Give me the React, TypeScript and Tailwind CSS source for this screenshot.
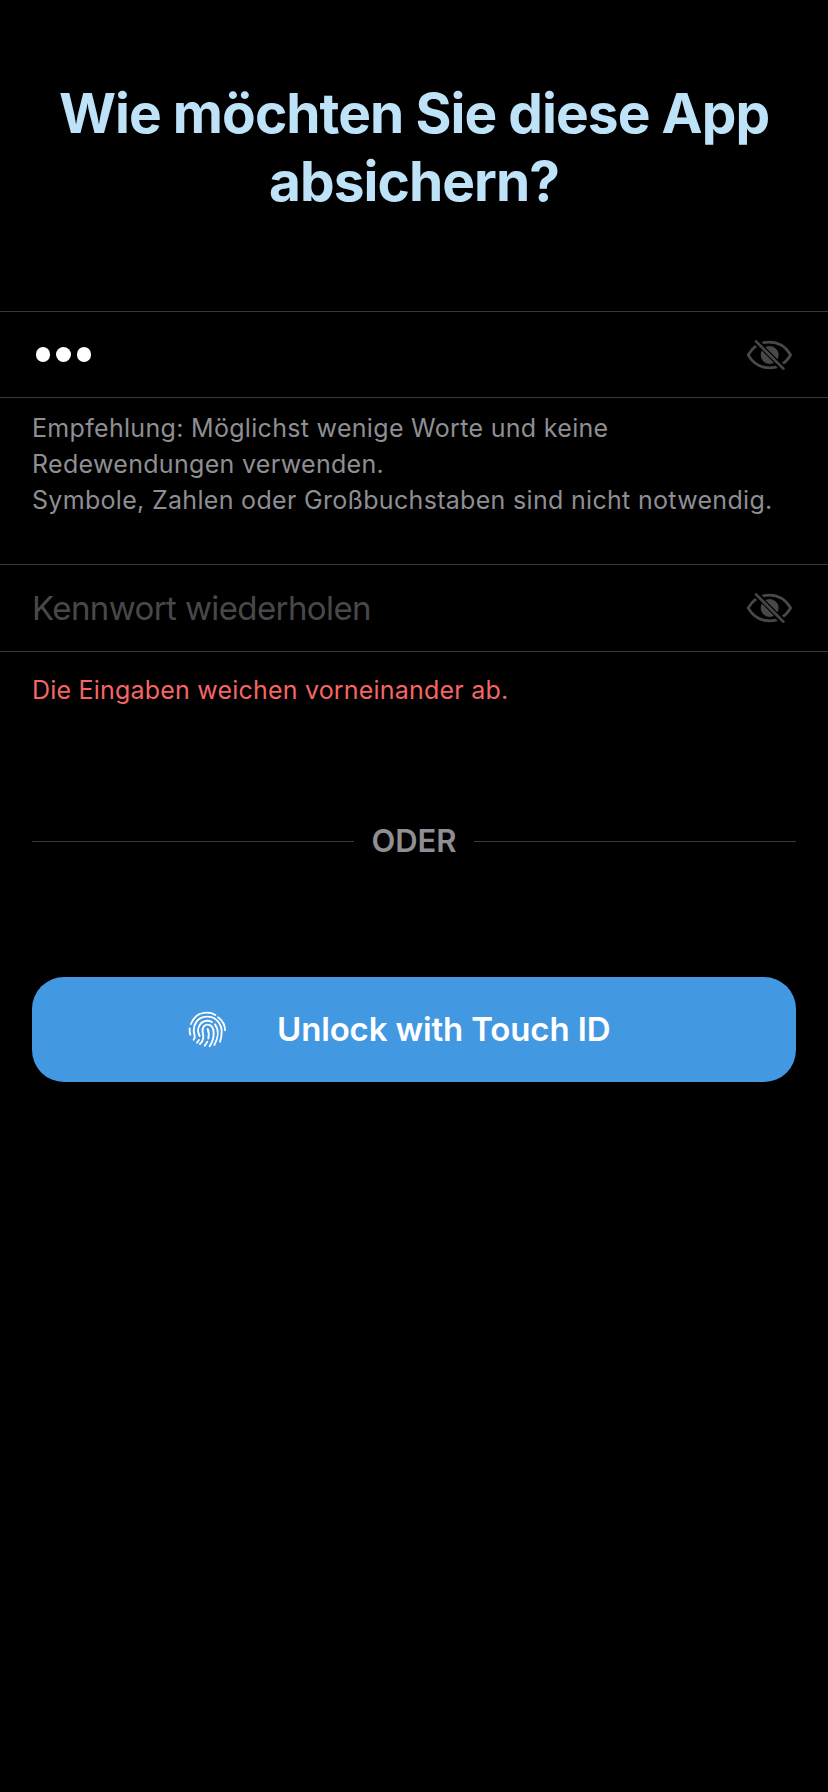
import React, { useId } from "react";

function EyeOff() {
  const id = useId();
  return (
    <svg viewBox="0 0 153 114" className="h-[38px] w-[51px] text-[#48484a]" fill="none" stroke="currentColor">
      <mask id={`${id}-lid`} maskUnits="userSpaceOnUse" x="0" y="0" width="153" height="114">
        <rect width="153" height="114" fill="white" stroke="none" />
        <path d="M24 4 L129 109" stroke="black" strokeWidth="20" />
      </mask>
      <mask id={`${id}-iris`} maskUnits="userSpaceOnUse" x="0" y="0" width="153" height="114">
        <rect width="153" height="114" fill="white" stroke="none" />
        <path d="M24 4 L129 109" stroke="black" strokeWidth="15" />
      </mask>
      <path
        mask={`url(#${id}-lid)`}
        d="M12.500 57 C28 31 50 18.500 76 18.500 C103 18.500 125 32 140 57 C125 82 103 95.500 76 95.500 C50 95.500 28 83 12.500 57 Z"
        strokeWidth="8"
        strokeLinejoin="round"
      />
      <circle mask={`url(#${id}-iris)`} cx="77" cy="57" r="27" fill="currentColor" stroke="none" />
      <path d="M36 16 L118 98" strokeWidth="8" strokeLinecap="round" />
    </svg>
  );
}

function Fingerprint({ className }: { className: string }) {
  return (
    <svg
      viewBox="0 0 123 120"
      className={`h-10 w-[41px] ${className}`}
      fill="none"
      stroke="currentColor"
      strokeWidth="5.6"
      strokeLinecap="round"
    >
      <path d="M12 42 C20 20 38 8 61 8 Q74 8 85 15" />
      <path d="M93 22 C107 32 114 47 114 61" />
      <path d="M8 55 Q7 65 10 74" />
      <path d="M20 89 Q25 83 22 73 C15 44 32 20 61 20 C88 20 104 42 104 65 Q104 81 99 95" />
      <path d="M30 98 L36 90" />
      <path d="M38 78 C33 68 31 58 36 49 C42 34 58 28 75 36" />
      <path d="M84 43 C97 60 93 85 82 105" />
      <path d="M39 102 C51 90 50 80 47 67 C44 51 54 43 63 44 C77 45 80 60 80 71 C80 86 75 98 68 109" />
      <path d="M62 57 C66 66 66 76 64 86" />
      <path d="M61 95 L53 107" />
    </svg>
  );
}

function Field({ children, className }: { children: React.ReactNode; className: string }) {
  return (
    <div className={`flex items-center justify-between border-y border-[#38383a] pl-8 pr-[33px] ${className}`}>
      {children}
      <EyeOff />
    </div>
  );
}

export default function App() {
  return (
    <main className="flex h-[1792px] w-[828px] flex-col overflow-hidden bg-black font-['Inter',sans-serif]">
      <h1 className="mt-[79px] text-center text-[55px] leading-[68px] font-bold tracking-[-0.95px] text-[#bee3f8]">
        Wie möchten Sie diese App
        <br />
        absichern?
      </h1>

      <Field className="mt-[96px] h-[87px]">
        <div className="flex gap-[6px] pl-[3.5px]">
          <span className="size-[14.5px] rounded-full bg-white" />
          <span className="size-[14.5px] rounded-full bg-white" />
          <span className="size-[14.5px] rounded-full bg-white" />
        </div>
      </Field>
      <p className="mt-3 h-[108px] pl-8 text-[25px] leading-9 tracking-[0.31px] whitespace-nowrap text-[#8e8e93]">
        Empfehlung: Möglichst wenige Worte und keine
        <br />
        Redewendungen verwenden.
        <br />
        Symbole, Zahlen oder Großbuchstaben sind nicht notwendig.
      </p>

      <Field className="mt-[46px] h-[88px]">
        <span className="text-[33px] leading-10 tracking-[-0.6px] text-[#48484a]">Kennwort wiederholen</span>
      </Field>
      <p className="mt-5 pl-8 text-[25px] leading-9 tracking-[0.2px] text-[#f56565]">
        Die Eingaben weichen vorneinander ab.
      </p>

      <div className="mx-8 mt-[113px] flex h-10 items-center">
        <span className="h-px flex-1 bg-[#38383a]" />
        <span className="w-[120px] text-center text-[31px] leading-10 font-semibold text-[#8e8e93]">ODER</span>
        <span className="h-px flex-1 bg-[#38383a]" />
      </div>

      <button className="mx-8 mt-[116px] flex h-[105px] items-center rounded-[32px] bg-[#4299e1] text-white">
        <Fingerprint className="ml-[155px]" />
        <span className="mb-[2px] ml-[49px] text-[33px] leading-10 font-semibold tracking-[-0.15px] whitespace-nowrap">
          Unlock with Touch ID
        </span>
      </button>
    </main>
  );
}
